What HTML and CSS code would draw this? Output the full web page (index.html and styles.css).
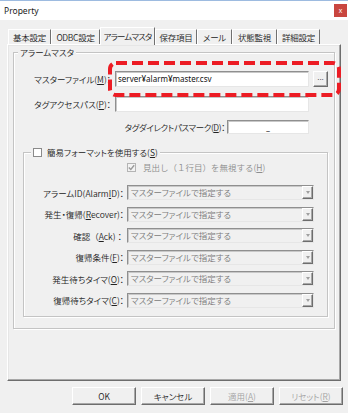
FILE: index.html
```html
<!DOCTYPE html>
<html lang="ja">
<head>
<meta charset="utf-8">
<title>Property</title>
<link rel="stylesheet" href="styles.css">
</head>
<body>
<div class="window">
  <div class="titlebar">
    <span class="title">Property</span>
    <span class="close">x</span>
  </div>
  <div class="main">
    <div class="tabs">
      <div class="tab t1">基本設定</div>
      <div class="tab t2">ODBC設定</div>
      <div class="tab t3 active">アラームマスタ</div>
      <div class="tab t4">保存項目</div>
      <div class="tab t5">メール</div>
      <div class="tab t6">状態監視</div>
      <div class="tab t7">詳細設定</div>
    </div>
    <div class="panel">
      <fieldset class="group outer">
        <legend class="group-title">アラームマスタ</legend>
        <div class="row row-file">
          <span class="lbl">マスターファイル(<u>M</u>)：</span>
          <div class="file-wrap">
            <div class="field">server¥alarm¥master.csv</div>
            <div class="btn3d browse">...</div>
            <svg class="highlight" width="233" height="36" viewBox="0 0 233 36">
              <rect x="2" y="2" width="229" height="32" rx="6" ry="6" fill="none" stroke="#ec1c24" stroke-width="4" stroke-dasharray="11 5"/>
            </svg>
          </div>
        </div>
        <div class="row row-path">
          <span class="lbl">タグアクセスパス(<u>P</u>)：</span>
          <div class="field"></div>
        </div>
        <div class="row row-mark">
          <span class="lbl"></span>
          <div class="mark-wrap">
            <span class="lbl-inline">タグダイレクトパスマーク(<u>D</u>)：</span>
            <div class="field field-mark">_</div>
          </div>
        </div>
        <fieldset class="group inner">
          <legend class="chk-legend"><span class="checkbox"></span>簡易フォーマットを使用する(<u>S</u>)</legend>
          <div class="header-row">
            <span class="checkbox checked-disabled">
              <svg width="7" height="7" viewBox="0 0 7 7"><path d="M0.8 3.4 L2.8 5.4 L6.2 1.2" fill="none" stroke="#9a9a9a" stroke-width="1.4"/></svg>
            </span>
            <span class="disabled-text">見出し（１行目）を無視する(<u>H</u>)</span>
          </div>
          <div class="combos">
            <div class="crow"><span class="clbl">アラームID(Alarm<u>I</u>D)：</span><div class="combo"><span class="ctext">マスターファイルで指定する</span><span class="cbtn"><span class="arrow"></span></span></div></div>
            <div class="crow"><span class="clbl">発生・復帰(<u>R</u>ecover)：</span><div class="combo"><span class="ctext">マスターファイルで指定する</span><span class="cbtn"><span class="arrow"></span></span></div></div>
            <div class="crow"><span class="clbl wide-punct">確認（<u>A</u>ck)：</span><div class="combo"><span class="ctext">マスターファイルで指定する</span><span class="cbtn"><span class="arrow"></span></span></div></div>
            <div class="crow"><span class="clbl">復帰条件(<u>F</u>)：</span><div class="combo"><span class="ctext">マスターファイルで指定する</span><span class="cbtn"><span class="arrow"></span></span></div></div>
            <div class="crow"><span class="clbl">発生待ちタイマ(<u>O</u>)：</span><div class="combo"><span class="ctext">マスターファイルで指定する</span><span class="cbtn"><span class="arrow"></span></span></div></div>
            <div class="crow"><span class="clbl">復帰待ちタイマ(<u>C</u>)：</span><div class="combo"><span class="ctext">マスターファイルで指定する</span><span class="cbtn"><span class="arrow"></span></span></div></div>
          </div>
        </fieldset>
      </fieldset>
    </div>
    <div class="buttons">
      <div class="btn3d button">OK</div>
      <div class="btn3d button">キャンセル</div>
      <div class="btn3d button disabled">適用(<u>A</u>)</div>
      <div class="btn3d button disabled">リセット(<u>R</u>)</div>
    </div>
  </div>
</div>
</body>
</html>
```

FILE: styles.css
```css
* { box-sizing: border-box; }
html, body { margin: 0; padding: 0; }
body {
  background: #f0f0f0;
  font-family: "Noto Sans CJK JP", "Noto Sans", sans-serif;
  font-size: 8.5px;
  font-weight: 350;
  line-height: 12px;
  color: #222;
  font-feature-settings: "palt";
}
u { text-decoration: underline; text-underline-offset: 1px; }

.window {
  width: 348px;
  height: 413px;
  display: flex;
  flex-direction: column;
  overflow: hidden;
}

.titlebar {
  height: 20px;
  flex: none;
  background: #fff;
  border-top: 1px solid #9dbbe0;
  display: flex;
  align-items: center;
  justify-content: space-between;
  padding-left: 4px;
}
.title {
  font-family: "Noto Sans", sans-serif;
  font-size: 8.5px;
  font-weight: 400;
  color: #222;
}
.close {
  width: 13px;
  height: 13px;
  margin-right: 1px;
  background: #c9463f;
  color: #fff;
  font-family: "Liberation Sans", sans-serif;
  font-size: 7px;
  line-height: 13px;
  text-align: center;
}

.main {
  flex: 1;
  display: flex;
  flex-direction: column;
  padding: 7px 5px 0 7px;
}

/* tabs */
.tabs {
  display: flex;
  align-items: flex-end;
  height: 17px;
  padding-left: 1px;
  position: relative;
  z-index: 1;
}
.tab {
  height: 15px;
  display: flex;
  align-items: center;
  justify-content: center;
  border-left: 1px solid #fff;
  border-top: 1px solid #fff;
  border-right: 1px solid #707070;
  white-space: nowrap;
  letter-spacing: -0.3px;
}
.tab.active {
  height: 18px;
  margin-bottom: -1px;
  background: #f0f0f0;
  padding-bottom: 2px;
  letter-spacing: -0.9px;
}
.t1 { width: 43px; }
.t2 { width: 49px; }
.t3 { width: 55px; }
.t4 { width: 42px; }
.t5 { width: 35px; }
.t6 { width: 45px; }
.t7 { width: 43px; }

/* panel */
.panel {
  width: 334px;
  height: 337px;
  flex: none;
  border: 1px solid;
  border-color: #fff #6d6d6d #6d6d6d #fff;
  box-shadow: inset -1px -1px 0 #a8a8a8, inset 1px 1px 0 #e6e6e6;
  padding: 0 0 0 5px;
}

/* group boxes */
.group {
  margin: 0;
  padding: 0;
  border: 1px solid #c4c4c4;
  box-shadow: 1px 1px 0 #fff, inset 1px 1px 0 #fff;
  min-width: 0;
}
.group legend {
  background: #f0f0f0;
  line-height: 12px;
}
.outer {
  width: 322px;
  margin-top: 1px;
  padding-bottom: 11px;
}
.group-title {
  margin-left: 4px;
  padding: 0 2px;
}

/* rows */
.row {
  display: flex;
  align-items: center;
}
.lbl {
  flex: none;
  width: 97px;
  margin-right: 4px;
  text-align: right;
  white-space: nowrap;
}
.row-file { margin-top: 13px; }
.row-path { margin-top: 9px; }
.row-mark { margin-top: 8px; }

.field {
  width: 194px;
  height: 16px;
  background: #fff;
  border: 1px solid;
  border-color: #8f8f8f #e6e6e6 #e6e6e6 #8f8f8f;
  box-shadow: inset 1px 1px 0 #c8c8c8;
  padding: 0 2px;
  font-family: "Noto Sans", sans-serif;
  font-size: 8px;
  font-weight: 400;
  line-height: 14px;
  color: #111;
  white-space: nowrap;
}
.file-wrap {
  display: flex;
  position: relative;
}
.btn3d {
  background: #f0f0f0;
  border: 1px solid;
  border-color: #fff #6d6d6d #6d6d6d #fff;
  box-shadow: inset -1px -1px 0 #a8a8a8;
}
.browse {
  width: 15px;
  height: 16px;
  margin-left: 4px;
  font-family: "Liberation Sans", sans-serif;
  font-size: 8px;
  line-height: 12px;
  text-align: center;
}
.highlight {
  position: absolute;
  left: -7px;
  top: -10px;
  pointer-events: none;
}

.mark-wrap {
  width: 194px;
  display: flex;
  justify-content: flex-end;
  align-items: center;
}
.lbl-inline {
  white-space: nowrap;
  margin-right: 2px;
  letter-spacing: -0.4px;
}
.field-mark {
  width: 82px;
  height: 14px;
  text-align: center;
  line-height: 11px;
}

/* inner group */
.inner {
  width: 305px;
  margin: 12px 0 0 9px;
  padding-bottom: 8px;
}
.chk-legend {
  display: flex;
  align-items: center;
  margin-left: 7px;
  padding: 0 2px;
}
.checkbox {
  display: inline-block;
  width: 9px;
  height: 9px;
  border: 1px solid #8a8a8a;
  background: #fff;
  margin-right: 5px;
}
.header-row {
  display: flex;
  align-items: center;
  height: 10px;
  margin: 4px 0 0 103px;
}
.checked-disabled {
  background: #f3f3f3;
  border-color: #b4b4b4;
  margin-right: 7px;
  display: flex;
  align-items: center;
  justify-content: center;
}
.disabled-text {
  color: #8d8d8d;
  font-feature-settings: normal;
}

.combos {
  display: flex;
  flex-direction: column;
  gap: 6.6px;
  margin-top: 13px;
}
.crow {
  display: flex;
  align-items: center;
  height: 15px;
}
.clbl {
  flex: none;
  width: 100px;
  margin-right: 3px;
  text-align: right;
  white-space: nowrap;
}
.wide-punct { font-feature-settings: normal; }
.combo {
  width: 187px;
  height: 15px;
  display: flex;
  align-items: stretch;
  border: 1px solid;
  border-color: #8f8f8f #e6e6e6 #e6e6e6 #8f8f8f;
  box-shadow: inset 1px 1px 0 #c8c8c8;
  background: #f0f0f0;
}
.ctext {
  flex: 1;
  padding-left: 3px;
  color: #7a7a7a;
  line-height: 13px;
  white-space: nowrap;
}
.cbtn {
  width: 11px;
  flex: none;
  display: flex;
  align-items: center;
  justify-content: center;
  border: 1px solid;
  border-color: #fff #6d6d6d #6d6d6d #fff;
  box-shadow: inset -1px -1px 0 #a8a8a8;
}
.arrow {
  width: 0;
  height: 0;
  border-left: 2.5px solid transparent;
  border-right: 2.5px solid transparent;
  border-top: 3px solid #a0a0a0;
}

/* buttons */
.buttons {
  display: flex;
  justify-content: flex-end;
  gap: 5px;
  margin-top: 6px;
}
.button {
  width: 64px;
  height: 18px;
  display: flex;
  align-items: center;
  justify-content: center;
}
.button.disabled { color: #a2a2a2; }
```
